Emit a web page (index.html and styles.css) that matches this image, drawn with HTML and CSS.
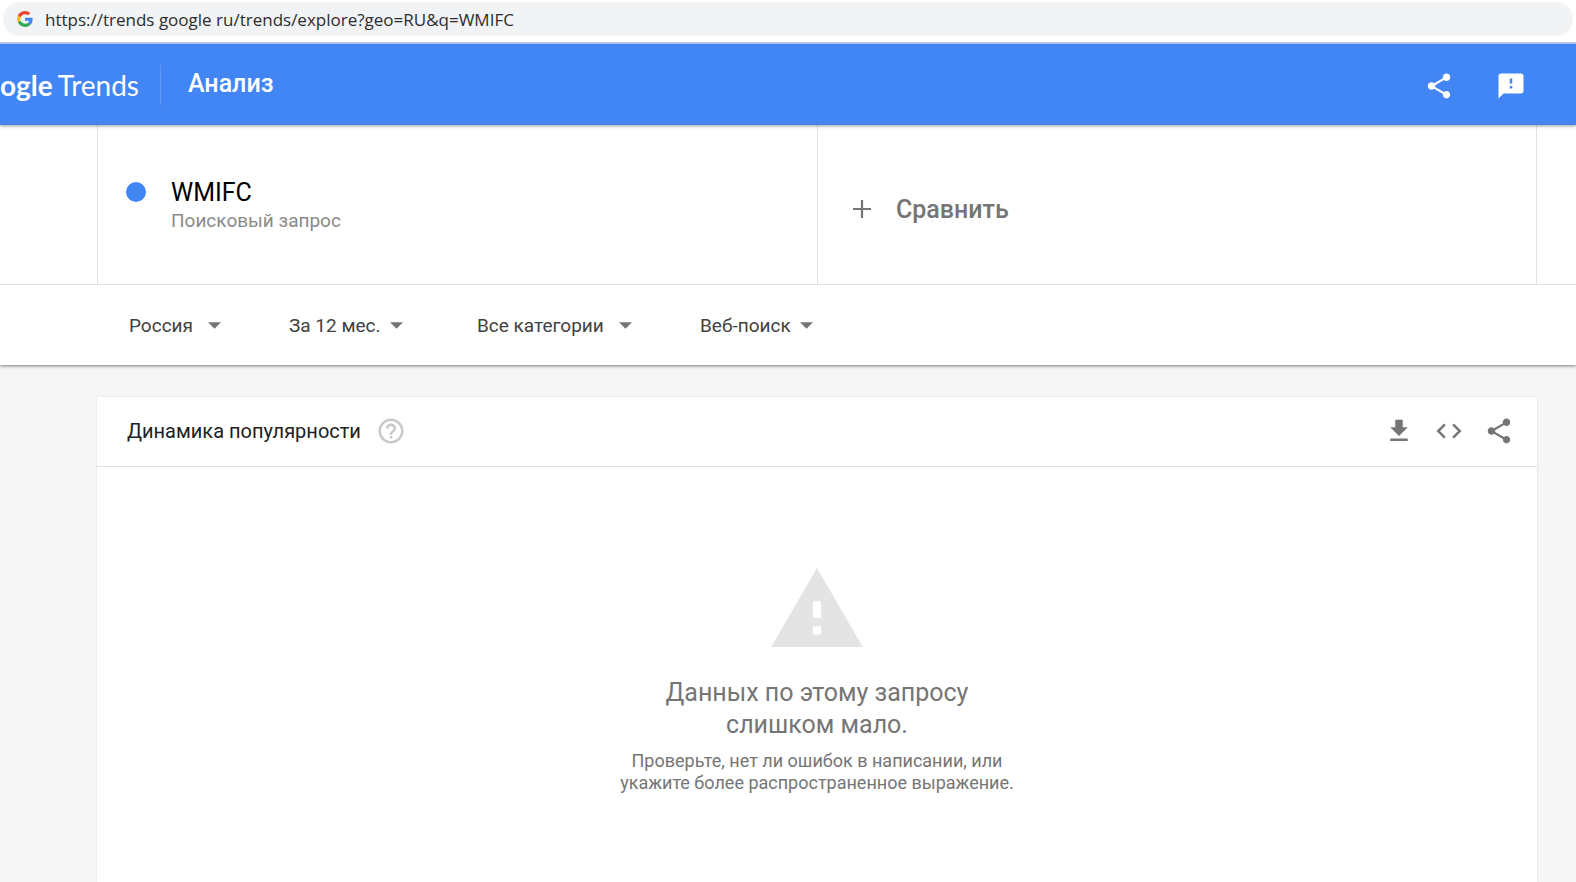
FILE: index.html
```html
<!DOCTYPE html>
<html lang="ru">
<head>
<meta charset="utf-8">
<meta name="viewport" content="width=device-width, initial-scale=1">
<title>Google Trends</title>
<link rel="stylesheet" href="styles.css">
</head>
<body>
<form class="address">
  <label class="address-pill">
    <svg class="g-logo" viewBox="0 0 48 48" aria-hidden="true">
      <path fill="#ea4335" d="M24 9.5c3.54 0 6.71 1.22 9.21 3.6l6.85-6.85C35.9 2.38 30.47 0 24 0 14.62 0 6.51 5.38 2.56 13.22l7.98 6.19C12.43 13.72 17.74 9.5 24 9.5z"/>
      <path fill="#4285f4" d="M46.98 24.55c0-1.57-.15-3.09-.38-4.55H24v9.02h12.94c-.58 2.96-2.26 5.48-4.78 7.18l7.73 6c4.51-4.18 7.09-10.36 7.09-17.65z"/>
      <path fill="#fbbc05" d="M10.53 28.59c-.48-1.45-.76-2.99-.76-4.59s.27-3.14.76-4.59l-7.98-6.19C.92 16.46 0 20.12 0 24c0 3.88.92 7.54 2.56 10.78l7.97-6.19z"/>
      <path fill="#34a853" d="M24 48c6.48 0 11.93-2.13 15.89-5.81l-7.73-6c-2.15 1.45-4.92 2.3-8.16 2.3-6.26 0-11.57-4.22-13.47-9.91l-7.98 6.19C6.51 42.62 14.62 48 24 48z"/>
    </svg>
    <input class="address-input" type="text" aria-label="Адрес" value="https://trends google ru/trends/explore?geo=RU&amp;q=WMIFC">
  </label>
</form>

<header class="topbar">
  <a class="brand" href="#"><span class="brand-name">ogle</span><span class="brand-product">Trends</span></a>
  <h1 class="page-title">Анализ</h1>
  <div class="topbar-actions">
    <button class="icon-button" type="button" aria-label="Поделиться">
      <svg viewBox="0 0 24 24" aria-hidden="true"><path d="M18 16.08c-.76 0-1.44.3-1.96.77L8.91 12.7c.05-.23.09-.46.09-.7s-.04-.47-.09-.7l7.05-4.11c.54.5 1.25.81 2.04.81 1.66 0 3-1.34 3-3s-1.34-3-3-3-3 1.34-3 3c0 .24.04.47.09.7L8.04 9.81C7.5 9.31 6.79 9 6 9c-1.66 0-3 1.34-3 3s1.34 3 3 3c.79 0 1.5-.31 2.04-.81l7.12 4.16c-.05.21-.08.43-.08.65 0 1.61 1.31 2.92 2.92 2.92s2.92-1.31 2.92-2.92-1.31-2.92-2.92-2.92z"/></svg>
    </button>
    <button class="icon-button" type="button" aria-label="Отправить отзыв">
      <svg viewBox="0 0 24 24" aria-hidden="true"><path d="M20 2H4c-1.1 0-1.99.9-1.99 2L2 22l4-4h14c1.1 0 2-.9 2-2V4c0-1.1-.9-2-2-2zm-7 12h-2v-2h2v2zm0-4h-2V6h2v4z"/></svg>
    </button>
  </div>
</header>

<section class="query">
  <div class="terms">
    <div class="term">
      <span class="term-dot"></span>
      <div>
        <div class="term-name">WMIFC</div>
        <div class="term-kind">Поисковый запрос</div>
      </div>
    </div>
    <button class="compare" type="button">
      <svg viewBox="0 0 18 18" aria-hidden="true"><path d="M7.900 0h2.200v7.900H18v2.200h-7.900V18H7.900v-7.900H0V7.900h7.900z"/></svg>
      Сравнить
    </button>
  </div>
  <div class="filters">
    <label class="filter filter-roomy"><select aria-label="Регион"><option>Россия</option></select><svg viewBox="0 0 14 7" aria-hidden="true"><path d="M0 0h14L7 7z"/></svg></label>
    <label class="filter"><select aria-label="Период"><option>За 12 мес.</option></select><svg viewBox="0 0 14 7" aria-hidden="true"><path d="M0 0h14L7 7z"/></svg></label>
    <label class="filter filter-roomy"><select aria-label="Категория"><option>Все категории</option></select><svg viewBox="0 0 14 7" aria-hidden="true"><path d="M0 0h14L7 7z"/></svg></label>
    <label class="filter"><select aria-label="Тип поиска"><option>Веб-поиск</option></select><svg viewBox="0 0 14 7" aria-hidden="true"><path d="M0 0h14L7 7z"/></svg></label>
  </div>
</section>

<main class="content">
  <section class="card">
    <header class="card-header">
      <h2 class="card-title">Динамика популярности</h2>
      <button class="icon-button help" type="button" aria-label="Справка">
        <svg viewBox="0 0 24 24" aria-hidden="true"><path d="M11 18h2v-2h-2v2zm1-16C6.480 2 2 6.480 2 12s4.480 10 10 10 10-4.480 10-10S17.520 2 12 2zm0 18c-4.410 0-8-3.590-8-8s3.590-8 8-8 8 3.590 8 8-3.590 8-8 8zm0-14c-2.210 0-4 1.790-4 4h2c0-1.100.9-2 2-2s2 .9 2 2c0 2-3 1.750-3 5h2c0-2.250 3-2.500 3-5 0-2.210-1.790-4-4-4z"/></svg>
      </button>
      <div class="card-actions">
        <button class="icon-button" type="button" aria-label="Скачать"><svg viewBox="0 0 24 24" aria-hidden="true"><path d="M19 9h-4V3H9v6H5l7 7 7-7zM5 18v2h14v-2H5z"/></svg></button>
        <button class="icon-button" type="button" aria-label="Встроить"><svg viewBox="0 0 24 24" aria-hidden="true"><path d="M9.400 16.600L4.800 12l4.600-4.600L8 6l-6 6 6 6 1.400-1.400zm5.200 0l4.600-4.600-4.600-4.600L16 6l6 6-6 6-1.400-1.400z"/></svg></button>
        <button class="icon-button" type="button" aria-label="Поделиться"><svg viewBox="0 0 24 24" aria-hidden="true"><path d="M18 16.08c-.76 0-1.440.3-1.960.77L8.910 12.700c.05-.23.09-.46.09-.7s-.04-.47-.09-.7l7.050-4.110c.54.5 1.250.81 2.040.81 1.660 0 3-1.340 3-3s-1.340-3-3-3-3 1.340-3 3c0 .24.04.47.09.7L8.040 9.810C7.500 9.310 6.790 9 6 9c-1.660 0-3 1.340-3 3s1.340 3 3 3c.79 0 1.500-.31 2.040-.81l7.120 4.160c-.05.21-.08.43-.08.65 0 1.610 1.310 2.920 2.920 2.920s2.920-1.310 2.920-2.920-1.310-2.920-2.920-2.920z"/></svg></button>
      </div>
    </header>
    <div class="empty">
      <svg class="empty-icon" viewBox="1 2 22 19" aria-hidden="true"><path d="M1 21h22L12 2 1 21zm12-3.300a.3.300 0 0 1-.3.300h-1.400a.3.300 0 0 1-.3-.3v-1.400a.3.300 0 0 1 .3-.3h1.400a.3.300 0 0 1 .3.300zm0-4a.3.300 0 0 1-.3.300h-1.400a.3.300 0 0 1-.3-.3v-3.400a.3.300 0 0 1 .3-.3h1.400a.3.300 0 0 1 .3.300z"/></svg>
      <p class="empty-title">Данных по этому запросу слишком мало.</p>
      <p class="empty-hint">Проверьте, нет ли ошибок в написании, или укажите более распространенное выражение.</p>
    </div>
  </section>
</main>
</body>
</html>
```
FILE: styles.css
```css
* {
  box-sizing: border-box;
}

body {
  margin: 0;
  min-height: 100vh;
  display: flex;
  flex-direction: column;
  background: #f6f6f6;
  color: #212121;
  font-family: Roboto, "Noto Sans", sans-serif;
}

h1,
h2,
p {
  margin: 0;
  font-weight: 400;
}

button,
select,
input {
  margin: 0;
  padding: 0;
  border: 0;
  background: none;
  color: inherit;
  font: inherit;
}

svg {
  display: block;
  fill: currentColor;
}

.address {
  padding: 2px 3px 6px;
  background: #fff;
  border-bottom: 2px solid #b9cdf0;
}

.address-pill {
  display: flex;
  align-items: center;
  gap: 12px;
  height: 34px;
  padding: 0 14px;
  border-radius: 17px;
  background: #f1f3f4;
}

.g-logo {
  width: 16px;
  height: 16px;
}

.address-input {
  flex: 1;
  outline: 0;
  color: #2b2d30;
  font-family: "Open Sans", sans-serif;
  font-size: 17px;
}

.topbar {
  position: relative;
  z-index: 1;
  display: flex;
  align-items: center;
  height: 81px;
  padding-right: 50px;
  background: #4285f4;
  box-shadow: 0 1px 3px rgba(0, 0, 0, 0.4);
  color: #fff;
}

.brand {
  display: flex;
  gap: 5px;
  width: 161px;
  padding: 2px 0;
  border-right: 1px solid #5f98f6;
  color: #fff;
  font-family: Lato, sans-serif;
  font-size: 28px;
  line-height: 36px;
  text-decoration: none;
}

.brand-name {
  font-weight: 700;
}

.page-title {
  padding: 0 0 2px 27px;
  font-size: 25px;
  font-weight: 500;
}

.topbar-actions {
  display: flex;
  gap: 42px;
  margin-left: auto;
  padding-top: 2px;
}

.icon-button svg {
  width: 30px;
  height: 30px;
}

.query {
  background: #fff;
  box-shadow: 0 1px 3px rgba(0, 0, 0, 0.5);
}

.terms {
  display: grid;
  grid-template-columns: 1fr 1fr;
  height: 160px;
  padding: 0 39px 0 97px;
  border-bottom: 1px solid #e0e0e0;
}

.term,
.compare {
  display: flex;
  border-left: 1px solid #e0e0e0;
}

.term {
  gap: 25px;
  padding: 53px 28px 0;
}

.term-dot {
  width: 20px;
  height: 20px;
  margin-top: 4px;
  border-radius: 50%;
  background: #4285f4;
}

.term-name {
  color: #000;
  font-size: 25px;
  line-height: 30px;
}

.term-kind {
  color: #8a8a8a;
  font-size: 19px;
  line-height: 26px;
}

.compare {
  align-items: center;
  gap: 25px;
  padding: 9px 35px 0;
  border-right: 1px solid #e0e0e0;
  color: #757575;
  font-size: 25px;
  font-weight: 500;
}

.compare svg {
  width: 18px;
  height: 18px;
}

.filters {
  display: flex;
  align-items: center;
  gap: 74px;
  height: 80px;
  padding-left: 129px;
}

.filter {
  display: flex;
  align-items: center;
  gap: 9px;
  color: #424242;
  font-size: 19px;
}

.filter-roomy {
  gap: 15px;
  margin-right: -6px;
}

.filter select {
  appearance: none;
}

.filter svg {
  width: 13px;
  height: 7px;
  color: #757575;
}

.content {
  flex: 1;
  display: flex;
  padding: 32px 39px 0 97px;
}

.card {
  flex: 1;
  background: #fff;
  box-shadow: 0 0 2px rgba(0, 0, 0, 0.12);
}

.card-header {
  display: flex;
  align-items: center;
  height: 70px;
  padding: 0 23px 2px 30px;
  border-bottom: 1px solid #e0e0e0;
}

.card-title {
  font-size: 20px;
}

.help {
  margin-left: 15px;
  color: #c8c8c8;
}

.card-actions {
  display: flex;
  gap: 20px;
  margin-left: auto;
  color: #757575;
}

.empty {
  display: flex;
  flex-direction: column;
  align-items: center;
  padding-top: 101px;
  color: #757575;
  text-align: center;
}

.empty-icon {
  width: 92px;
  height: 79px;
  color: #e4e4e4;
}

.empty-title {
  max-width: 340px;
  padding-top: 30px;
  font-size: 25px;
  line-height: 32px;
}

.empty-hint {
  max-width: 400px;
  padding-top: 9px;
  font-size: 18px;
  line-height: 22px;
}
```
